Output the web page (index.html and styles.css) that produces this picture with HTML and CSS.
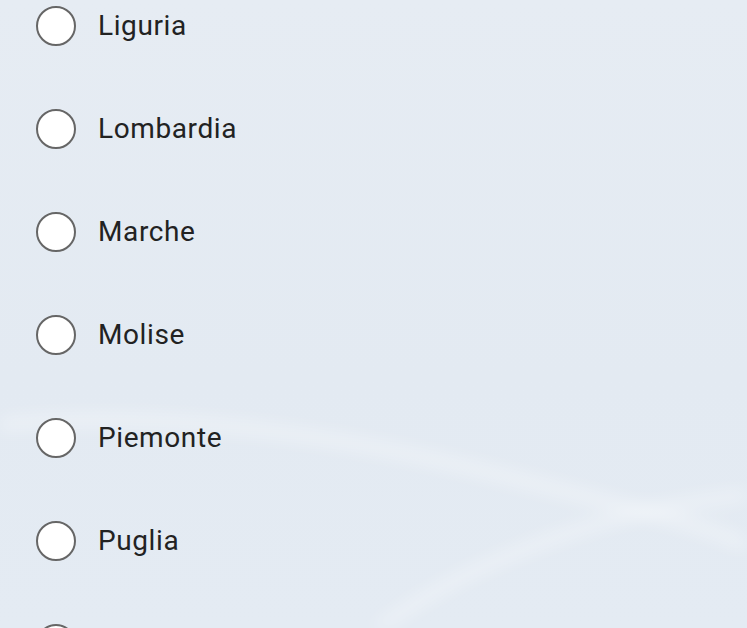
FILE: index.html
```html
<!DOCTYPE html>
<html lang="it">
<head>
 <meta charset="UTF-8">
 <title>Regione</title>
 <link rel="stylesheet" href="styles.css">
</head>
<body>
 <svg class="waves" viewBox="0 0 747 628" preserveAspectRatio="none">
  <path d="M0 425 C 150 410, 320 430, 500 475 S 700 525, 747 545" fill="none" stroke="#ffffff" stroke-opacity="0.3" stroke-width="16"/>
  <path d="M370 635 C 460 565, 600 510, 747 495" fill="none" stroke="#ffffff" stroke-opacity="0.3" stroke-width="14"/>
 </svg>
 <ul class="regions">
  <li><span class="radio"></span><span class="name">Liguria</span></li>
  <li><span class="radio"></span><span class="name">Lombardia</span></li>
  <li><span class="radio"></span><span class="name">Marche</span></li>
  <li><span class="radio"></span><span class="name">Molise</span></li>
  <li><span class="radio"></span><span class="name">Piemonte</span></li>
  <li><span class="radio"></span><span class="name">Puglia</span></li>
  <li><span class="radio"></span></li>
 </ul>
</body>
</html>
```

FILE: styles.css
```css
html, body {
 height: 100%;
}

body {
 margin: 0;
 overflow: hidden;
 background: linear-gradient(180deg, #e6ecf3 0%, #e3eaf2 60%, #e4ebf3 100%);
 font-family: Roboto, "Noto Sans", sans-serif;
 color: #222;
}

.waves {
 position: absolute;
 left: 0;
 top: 0;
 width: 100%;
 height: 100%;
 filter: blur(8px);
}

.regions {
 position: relative;
 list-style-type: none;
 margin: -26px 0 0 0;
 padding: 0 0 0 36px;
}

.regions li {
 display: flex;
 align-items: center;
 height: 103px;
}

.radio {
 box-sizing: border-box;
 width: 40px;
 height: 40px;
 border: 2px solid #666;
 border-radius: 50%;
 background-color: #fff;
 flex-shrink: 0;
}

.name {
 margin-left: 22px;
 font-size: 28px;
 letter-spacing: 0.6px;
}
```
